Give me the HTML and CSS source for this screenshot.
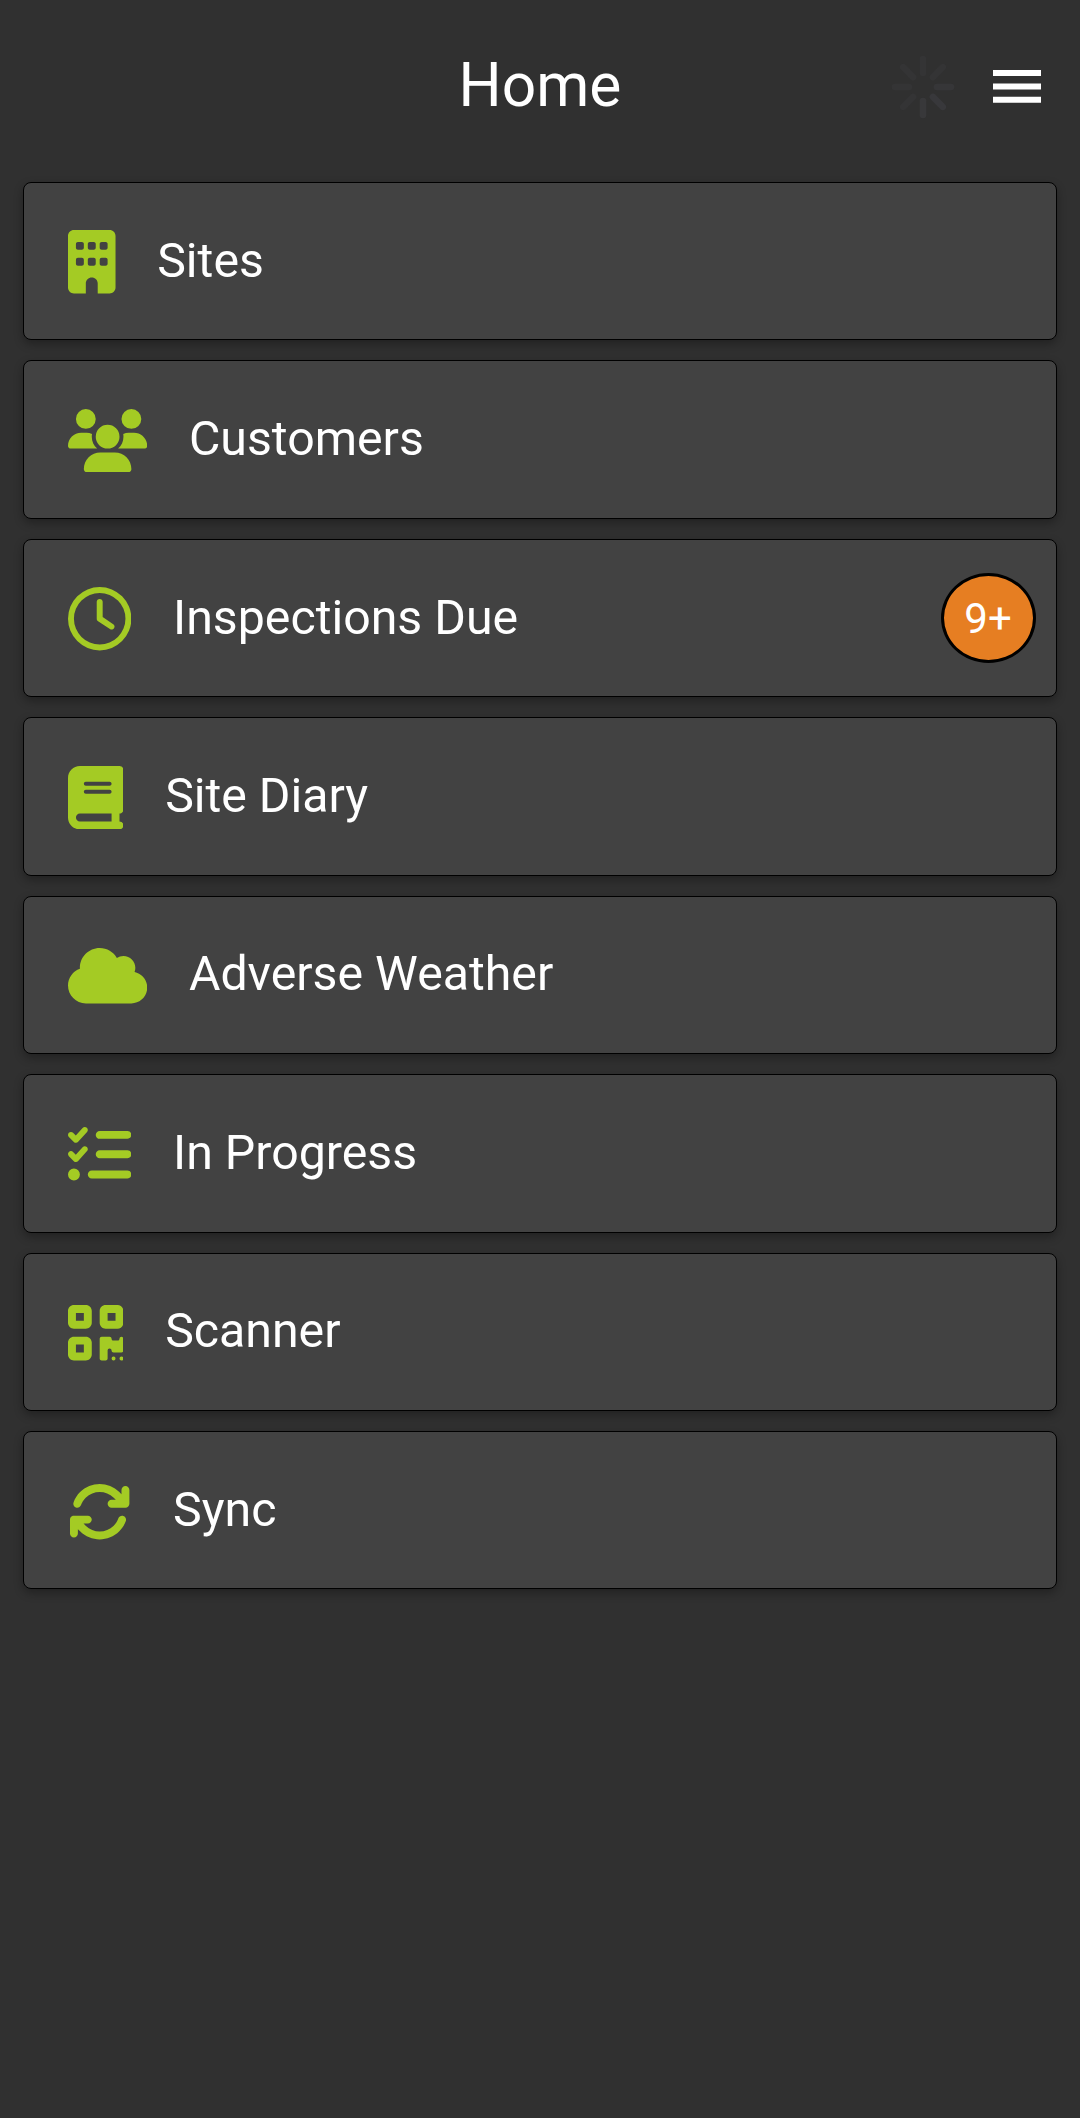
FILE: index.html
```html
<!DOCTYPE html>
<html lang="en">
<head>
<meta charset="utf-8">
<title>Home</title>
<link rel="stylesheet" href="styles.css">
</head>
<body>
<header class="header">
  <h1 class="title">Home</h1>
  <div class="actions">
    <svg class="spinner" viewBox="-32 -32 64 64" aria-hidden="true">
      <g stroke-width="6.6" stroke-linecap="round">
        <path stroke="#363638" d="M14 0H28"/>
        <path stroke="#38383b" d="M9.9 9.9L19.8 19.8"/>
        <path stroke="#38383a" d="M0 14V28"/>
        <path stroke="#343435" d="M-9.9 9.9L-19.8 19.8M-14 0H-28M-9.9 -9.9L-19.8 -19.8M0 -14V-28M9.9 -9.9L19.8 -19.8"/>
      </g>
    </svg>
    <button class="menu" aria-label="Menu">
      <svg class="menu-icon" viewBox="0 0 48 33"><path d="M0 0h48v6H0zM0 13.4h48v6H0zM0 26.8h48v6H0z"/></svg>
    </button>
  </div>
</header>
<main class="list">
  <a class="card">
    <svg class="icon" viewBox="0 0 384 512"><path d="M48 0C21.5 0 0 21.5 0 48V464c0 26.500 21.500 48 48 48h96V432c0-26.500 21.500-48 48-48s48 21.500 48 48v80h96c26.500 0 48-21.500 48-48V48c0-26.500-21.500-48-48-48H48zM64 240c0-8.800 7.200-16 16-16h32c8.800 0 16 7.200 16 16v32c0 8.800-7.200 16-16 16H80c-8.800 0-16-7.200-16-16V240zm112-16h32c8.800 0 16 7.200 16 16v32c0 8.800-7.200 16-16 16H176c-8.800 0-16-7.200-16-16V240c0-8.800 7.200-16 16-16zm80 16c0-8.800 7.200-16 16-16h32c8.800 0 16 7.200 16 16v32c0 8.800-7.200 16-16 16H272c-8.800 0-16-7.200-16-16V240zM80 96h32c8.800 0 16 7.200 16 16v32c0 8.800-7.200 16-16 16H80c-8.800 0-16-7.200-16-16V112c0-8.800 7.200-16 16-16zm80 16c0-8.800 7.200-16 16-16h32c8.800 0 16 7.200 16 16v32c0 8.800-7.200 16-16 16H176c-8.800 0-16-7.200-16-16V112zM272 96h32c8.800 0 16 7.200 16 16v32c0 8.800-7.200 16-16 16H272c-8.800 0-16-7.200-16-16V112c0-8.800 7.200-16 16-16z"/></svg>
    <span class="label">Sites</span>
  </a>
  <a class="card">
    <svg class="icon" viewBox="0 0 640 512"><path d="M144 0a80 80 0 1 1 0 160A80 80 0 1 1 144 0zM512 0a80 80 0 1 1 0 160A80 80 0 1 1 512 0zM0 298.7C0 239.8 47.8 192 106.7 192h42.7c15.9 0 31 3.5 44.6 9.7c-1.3 7.2-1.9 14.7-1.9 22.3c0 38.2 16.8 72.5 43.3 96c-.2 0-.4 0-.7 0H21.3C9.6 320 0 310.4 0 298.7zM405.3 320c-.2 0-.4 0-.7 0c26.6-23.5 43.3-57.800 43.3-96c0-7.600-.7-15-1.9-22.3c13.6-6.3 28.7-9.7 44.6-9.7h42.7C592.2 192 640 239.8 640 298.7c0 11.8-9.6 21.3-21.3 21.3H405.3zM224 224a96 96 0 1 1 192 0 96 96 0 1 1 -192 0zM128 485.3C128 411.7 187.7 352 261.3 352H378.7C452.3 352 512 411.7 512 485.3c0 14.7-11.9 26.7-26.7 26.7H154.7c-14.7 0-26.7-11.9-26.7-26.7z"/></svg>
    <span class="label">Customers</span>
  </a>
  <a class="card">
    <svg class="icon" viewBox="0 0 512 512"><path d="M464 256A208 208 0 1 1 48 256a208 208 0 1 1 416 0zM0 256a256 256 0 1 0 512 0A256 256 0 1 0 0 256zM232 120V256c0 8 4 15.5 10.7 20l96 64c11 7.4 25.9 4.4 33.3-6.7s4.4-25.9-6.7-33.3L280 243.2V120c0-13.3-10.7-24-24-24s-24 10.7-24 24z"/></svg>
    <span class="label">Inspections Due</span>
    <span class="badge">9+</span>
  </a>
  <a class="card">
    <svg class="icon" viewBox="0 0 448 512"><path d="M96 0C43 0 0 43 0 96V416c0 53 43 96 96 96H384h32c17.7 0 32-14.3 32-32s-14.3-32-32-32V384c17.7 0 32-14.3 32-32V32c0-17.7-14.3-32-32-32H384 96zm0 384H352v64H96c-17.7 0-32-14.3-32-32s14.3-32 32-32zm32-240c0-8.8 7.2-16 16-16H336c8.8 0 16 7.2 16 16s-7.2 16-16 16H144c-8.8 0-16-7.2-16-16zm16 48H336c8.8 0 16 7.2 16 16s-7.2 16-16 16H144c-8.8 0-16-7.2-16-16s7.2-16 16-16z"/></svg>
    <span class="label">Site Diary</span>
  </a>
  <a class="card">
    <svg class="icon" viewBox="0 0 640 512"><path d="M0 336c0 79.5 64.5 144 144 144H512c70.7 0 128-57.3 128-128c0-61.9-44-113.6-102.4-125.4c4.1-10.7 6.4-22.4 6.4-34.6c0-53-43-96-96-96c-19.7 0-38.1 6-53.3 16.2C367 64.2 315.3 32 256 32C167.6 32 96 103.6 96 192c0 2.7 .1 5.4 .2 8.1C40.2 219.8 0 273.2 0 336z"/></svg>
    <span class="label">Adverse Weather</span>
  </a>
  <a class="card">
    <svg class="icon" viewBox="0 0 512 512"><path d="M152.1 38.2c9.9 8.9 10.7 24 1.8 33.9l-72 80c-4.4 4.9-10.6 7.8-17.2 7.900s-12.9-2.400-17.600-7L7 113C-2.3 103.600-2.3 88.400 7 79s24.600-9.400 33.900 0l22.100 22.100 55.100-61.200c8.900-9.900 24-10.700 33.900-1.800zM152.100 193.200c9.900 8.900 10.700 24 1.800 33.900l-72 80c-4.400 4.900-10.600 7.800-17.200 7.900s-12.900-2.400-17.600-7L7 268C-2.300 258.600-2.300 243.400 7 234s24.600-9.400 33.900 0l22.100 22.100 55.100-61.200c8.900-9.900 24-10.700 33.900-1.800zM224 96c0-17.700 14.300-32 32-32H480c17.700 0 32 14.300 32 32s-14.300 32-32 32H256c-17.700 0-32-14.300-32-32zM224 252c0-17.700 14.300-32 32-32H480c17.700 0 32 14.300 32 32s-14.300 32-32 32H256c-17.700 0-32-14.300-32-32zM160 416c0-17.700 14.300-32 32-32H480c17.700 0 32 14.300 32 32s-14.300 32-32 32H192c-17.700 0-32-14.300-32-32zM48 368a48 48 0 1 1 0 96 48 48 0 1 1 0-96z"/></svg>
    <span class="label">In Progress</span>
  </a>
  <a class="card">
    <svg class="icon" viewBox="0 0 448 512"><path d="M0 80C0 53.5 21.5 32 48 32h96c26.500 0 48 21.500 48 48v96c0 26.500-21.500 48-48 48H48c-26.500 0-48-21.500-48-48V80zM64 96v64h64V96H64zM0 336c0-26.500 21.500-48 48-48h96c26.500 0 48 21.500 48 48v96c0 26.500-21.500 48-48 48H48c-26.500 0-48-21.500-48-48V336zm64 16v64h64V352H64zM304 32h96c26.500 0 48 21.500 48 48v96c0 26.500-21.500 48-48 48H304c-26.500 0-48-21.500-48-48V80c0-26.500 21.500-48 48-48zm80 64H320v64h64V96zM256 304c0-8.800 7.200-16 16-16h64c8.800 0 16 7.200 16 16s7.200 16 16 16h32c8.800 0 16-7.200 16-16s7.200-16 16-16s16 7.200 16 16v96c0 8.800-7.200 16-16 16H368c-8.800 0-16-7.200-16-16s-7.200-16-16-16s-16 7.200-16 16v64c0 8.800-7.200 16-16 16H272c-8.800 0-16-7.200-16-16V304zM368 480a16 16 0 1 1 0-32 16 16 0 1 1 0 32zm64 0a16 16 0 1 1 0-32 16 16 0 1 1 0 32z"/></svg>
    <span class="label">Scanner</span>
  </a>
  <a class="card">
    <svg class="icon" viewBox="0 0 512 512"><path d="M105.1 202.6c7.7-21.8 20.2-42.3 37.8-59.8c62.5-62.5 163.8-62.5 226.3 0L386.3 160H352c-17.7 0-32 14.3-32 32s14.3 32 32 32H463.9c17.7 0 32-14.3 32-32V80c0-17.7-14.3-32-32-32s-32 14.3-32 32v35.2L414.4 97.6c-87.5-87.5-229.3-87.5-316.8 0C73.2 122 55.6 150.7 44.8 181.4c-5.9 16.7 2.9 34.9 19.5 40.8s34.9-2.9 40.8-19.5zM39 289.3c-5 1.500-9.800 4.200-13.700 8.200c-4 4-6.700 8.800-8.100 14c-.3 1.200-.6 2.500-.8 3.800c-.3 1.700-.4 3.400-.4 5.100V432c0 17.700 14.300 32 32 32s32-14.300 32-32V396.900l17.600 17.500c87.500 87.400 229.300 87.400 316.700 0c24.400-24.400 42.100-53.100 52.900-83.700c5.900-16.700-2.900-34.900-19.500-40.800s-34.900 2.900-40.800 19.500c-7.700 21.800-20.200 42.300-37.800 59.800c-62.500 62.500-163.800 62.500-226.300 0l-.1-.1L125.600 352H160c17.700 0 32-14.300 32-32s-14.300-32-32-32H48.400c-1.600 0-3.200 .1-4.800 .3s-3.100 .5-4.600 1z"/></svg>
    <span class="label">Sync</span>
  </a>
</main>
</body>
</html>
```
FILE: styles.css
```css
* {
  box-sizing: border-box;
}

body {
  margin: 0;
  min-height: 100vh;
  background: #303030;
  color: #fff;
  font-family: Roboto, "Liberation Sans", sans-serif;
}

.header {
  display: grid;
  grid-template-columns: 1fr auto 1fr;
  align-items: center;
  height: 173px;
  padding: 0 39px;
}

.title {
  grid-column: 2;
  margin: 0;
  padding-bottom: 2px;
  font-size: 60.5px;
  font-weight: 400;
  line-height: 72px;
}

.actions {
  display: flex;
  align-items: center;
  justify-content: flex-end;
  gap: 38.5px;
}

.spinner {
  width: 64px;
  height: 64px;
}

.menu {
  display: flex;
  padding: 0;
  border: 0;
  background: none;
}

.menu-icon {
  width: 48px;
  height: 33px;
  fill: #fff;
}

.list {
  display: flex;
  flex-direction: column;
  gap: 20.2px;
  padding: 9px 23px 0;
}

.card {
  display: flex;
  align-items: center;
  height: 158.27px;
  padding: 2px 20.5px 0 44px;
  border: 1px solid #000;
  border-radius: 8px;
  background: #424242;
  box-shadow: 0 4px 10px rgba(0, 0, 0, 0.3);
}

.icon {
  height: 63.4px;
  flex: none;
  fill: #a4cb24;
}

.label {
  margin-left: 41.7px;
  padding-bottom: 3px;
  font-size: 48.25px;
  line-height: 56px;
}

.badge {
  display: flex;
  align-items: center;
  justify-content: center;
  width: 95px;
  height: 90px;
  margin: 0 0 2px auto;
  border: 3px solid #000;
  border-radius: 50%;
  background: #e67e22;
  font-size: 42px;
}
```
